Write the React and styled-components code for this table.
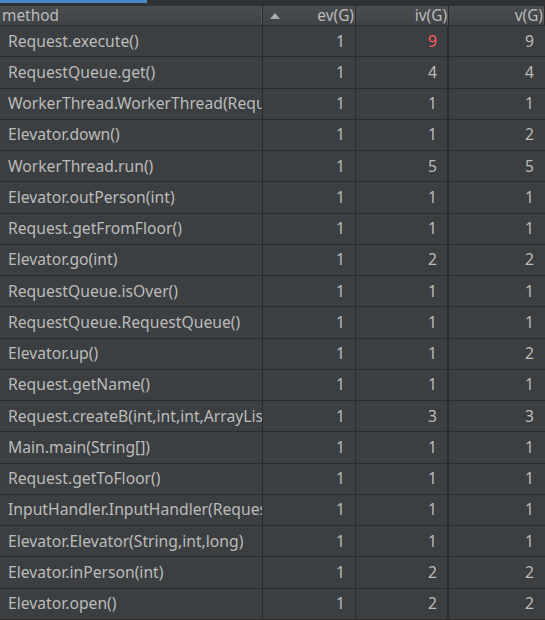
import React from 'react';
import styled, { createGlobalStyle } from 'styled-components';

const GlobalStyle = createGlobalStyle`
    html, body {
        margin: 0;
        padding: 0;
        background: #3c3f41;
    }
    body {
        font-family: "Noto Sans", "Noto Sans CJK SC", sans-serif;
        overflow: hidden;
    }
`

const rows = [
    ['Request.execute()', 1, 9, 9, true],
    ['RequestQueue.get()', 1, 4, 4],
    ['WorkerThread.WorkerThread(RequestQueue)', 1, 1, 1],
    ['Elevator.down()', 1, 1, 2],
    ['WorkerThread.run()', 1, 5, 5],
    ['Elevator.outPerson(int)', 1, 1, 1],
    ['Request.getFromFloor()', 1, 1, 1],
    ['Elevator.go(int)', 1, 2, 2],
    ['RequestQueue.isOver()', 1, 1, 1],
    ['RequestQueue.RequestQueue()', 1, 1, 1],
    ['Elevator.up()', 1, 1, 2],
    ['Request.getName()', 1, 1, 1],
    ['Request.createB(int,int,int,ArrayList)', 1, 3, 3],
    ['Main.main(String[])', 1, 1, 1],
    ['Request.getToFloor()', 1, 1, 1],
    ['InputHandler.InputHandler(RequestQueue)', 1, 1, 1],
    ['Elevator.Elevator(String,int,long)', 1, 1, 1],
    ['Elevator.inPerson(int)', 1, 2, 2],
    ['Elevator.open()', 1, 2, 2],
];

const Panel = styled.div`
    width: 545px;
    height: 620px;
    display: flex;
    flex-direction: column;
    background: #3c3f41;
    overflow: hidden;
`

const TabStrip = styled.div`
    height: 6px;
    background: #2f3133;
    flex-shrink: 0;
`

const TabMarker = styled.div`
    width: 147px;
    height: 3px;
    background: #4a88c7;
`

const Grid = styled.div`
    display: grid;
    grid-template-columns: 263px 93px 93px 1fr;
`

const HeaderCell = styled.div`
    height: 20px;
    box-sizing: border-box;
    display: flex;
    align-items: center;
    justify-content: ${p => p.$left ? 'flex-start' : 'flex-end'};
    padding: ${p => p.$left ? '0 0 0 2px' : '0 1px 0 0'};
    position: relative;
    background: linear-gradient(#4a4d50, #404346);
    border-bottom: 1px solid #2b2b2b;
    border-right: 1px solid #2b2b2b;
    box-shadow: inset -1px 0 0 #55585b;
    color: #bbbbbb;
    font-size: 15.4px;
    line-height: 1;
    &:last-child {
        border-right: none;
        box-shadow: none;
    }
`

const SortArrow = styled.span`
    position: absolute;
    left: 7px;
    top: 7px;
    width: 0;
    height: 0;
    border-left: 5px solid transparent;
    border-right: 5px solid transparent;
    border-bottom: 6px solid #a9abad;
`

const Cell = styled.div`
    height: 31.25px;
    box-sizing: border-box;
    display: flex;
    align-items: center;
    justify-content: ${p => p.$left ? 'flex-start' : 'flex-end'};
    padding: ${p => p.$left ? '0 0 1px 8px' : '0 10px 1px 0'};
    border-bottom: 1px solid #2b2b2b;
    border-right: ${p => p.$thick ? 2 : 1}px solid #2b2b2b;
    color: ${p => p.$alert ? '#ff5a5a' : '#bbbbbb'};
    font-size: 15.7px;
    white-space: nowrap;
    overflow: hidden;
    &:nth-child(4n) {
        border-right: none;
        padding-right: 11px;
    }
`

const App = () => {
    return (
        <Panel>
            <GlobalStyle />
            <TabStrip>
                <TabMarker />
            </TabStrip>
            <Grid>
                <HeaderCell $left>method</HeaderCell>
                <HeaderCell><SortArrow />ev(G)</HeaderCell>
                <HeaderCell>iv(G)</HeaderCell>
                <HeaderCell>v(G)</HeaderCell>
                {rows.map(([name, ev, iv, v, alert]) => (
                    <React.Fragment key={name}>
                        <Cell $left>{name}</Cell>
                        <Cell>{ev}</Cell>
                        <Cell $alert={alert} $thick>{iv}</Cell>
                        <Cell>{v}</Cell>
                    </React.Fragment>
                ))}
            </Grid>
        </Panel>
    )
};

export default App;
